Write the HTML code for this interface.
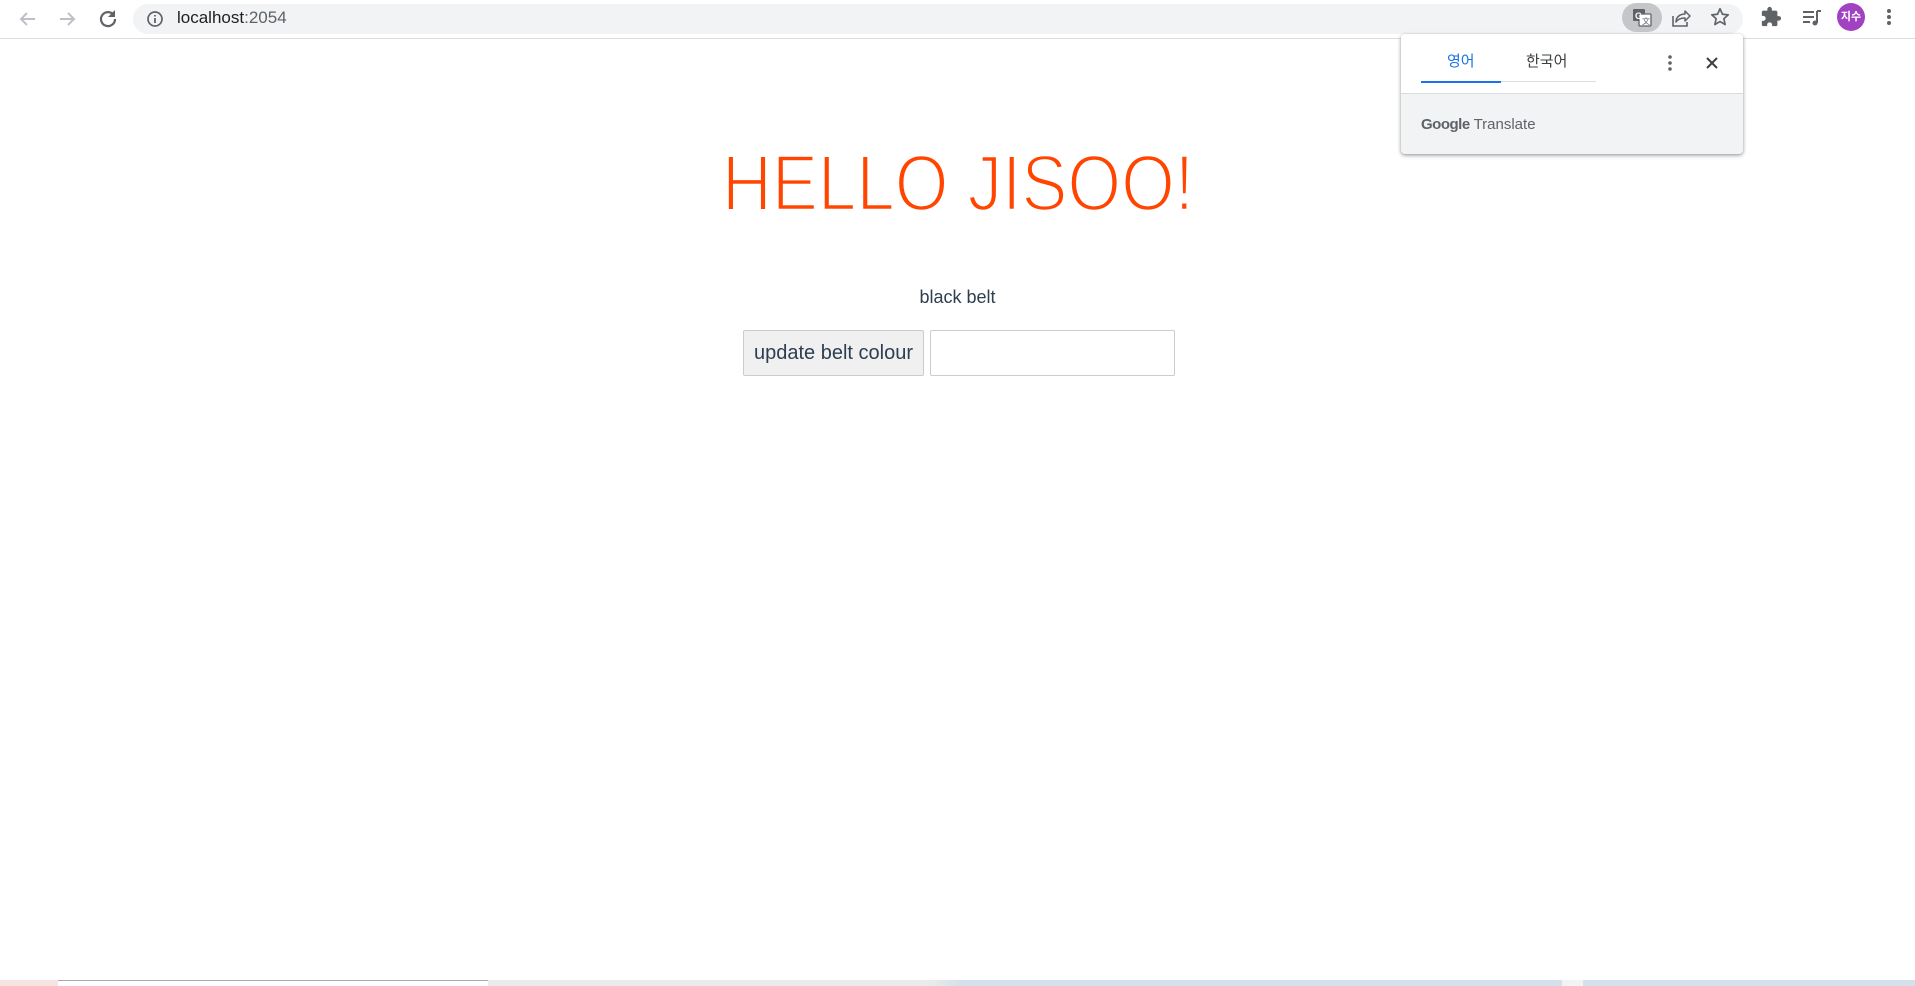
<!DOCTYPE html>
<html><head><meta charset="utf-8">
<style>
*{margin:0;padding:0;box-sizing:border-box}
body{width:1915px;height:986px;overflow:hidden;background:#fff;font-family:"Liberation Sans","Noto Sans CJK KR",sans-serif;position:relative}
.bar{position:absolute;left:0;top:0;width:1915px;height:39px;background:#fff;border-bottom:1px solid #dadce0}
.omni{position:absolute;left:133px;top:4px;width:1610px;height:30px;border-radius:15px;background:#f1f3f4}
.url{position:absolute;left:177px;top:8px;font-size:17px;color:#202124}
.url span{color:#5f6368}
.ic{position:absolute}
.pop{position:absolute;left:1401px;top:34px;width:342px;height:120px;background:#f1f3f4;border-radius:4px;box-shadow:0 1px 3px rgba(0,0,0,.35),0 2px 6px rgba(0,0,0,.12);overflow:hidden}
.pop .top{height:60px;background:#fff;border-bottom:1px solid #dadce0;position:relative}
.t{position:absolute;top:16px;font-size:15px}
.foot{position:absolute;left:20px;top:82px;font-size:15px;color:#5f6368}
.foot b{font-weight:bold;color:#5f6368;letter-spacing:-.5px}
.belt{position:absolute;left:0;width:1915px;top:287px;text-align:center;font-size:18px;color:#2c3e50}
.btn{position:absolute;left:743px;top:330px;width:181px;height:46px;background:#f0f0f0;border:1px solid #ccc;border-radius:2px;font-size:20px;color:#2c3e50;text-align:center;line-height:44px;white-space:nowrap}
.inp{position:absolute;left:930px;top:330px;width:245px;height:46px;border:1px solid #ccc;border-radius:2px;background:#fff}
</style></head><body>
<div class="bar">
<div class="omni"></div>
<svg class="ic" style="left:17px;top:8px" width="22" height="22" viewBox="0 0 22 22"><path d="M18 11H5M10 5l-6 6 6 6" stroke="#bdc1c6" stroke-width="2" fill="none"/></svg>
<svg class="ic" style="left:56px;top:8px" width="22" height="22" viewBox="0 0 22 22"><path d="M4 11h13M12 5l6 6-6 6" stroke="#bdc1c6" stroke-width="2" fill="none"/></svg>
<svg class="ic" style="left:97px;top:7px" width="22" height="22" viewBox="0 0 22 22"><path d="M17 8.5A7 7 0 1 0 18 12" stroke="#5f6368" stroke-width="2.2" fill="none"/><path d="M18 3v7h-7z" fill="#5f6368"/></svg>
<svg class="ic" style="left:146px;top:10px" width="18" height="18" viewBox="0 0 18 18"><circle cx="9" cy="9" r="7" stroke="#5f6368" stroke-width="1.7" fill="none"/><path d="M9 8v5M9 5v1.5" stroke="#5f6368" stroke-width="1.8"/></svg>
<div class="url">localhost<span>:2054</span></div>
<div class="ic" style="left:1622px;top:3px;width:40px;height:29px;border-radius:15px;background:#c4c6c9"></div>
<svg class="ic" style="left:1632px;top:7px" width="20" height="20" viewBox="0 0 20 20"><rect x="1" y="2" width="12" height="12" rx="1" fill="#5f6368"/><rect x="7" y="7" width="12" height="12" rx="1" fill="#fff" stroke="#5f6368" stroke-width="1.3"/><text x="3" y="12" font-size="9" font-weight="bold" fill="#fff" font-family="Liberation Sans">G</text><text x="10" y="17" font-size="8" fill="#5f6368" font-family="Liberation Sans">文</text></svg>
<svg class="ic" style="left:1670px;top:7px" width="22" height="22" viewBox="0 0 22 22"><path d="M3 9v10h14v-4" stroke="#5f6368" stroke-width="1.6" fill="none"/><path d="M6 15c0-5 4-8 9-8V4l5 5-5 5v-3c-4 0-7 1-9 4z" stroke="#5f6368" stroke-width="1.5" fill="none" stroke-linejoin="round"/></svg>
<svg class="ic" style="left:1709px;top:6px" width="22" height="22" viewBox="0 0 24 24"><path d="M12 3l2.7 6 6.3.6-4.8 4.3 1.4 6.3L12 17l-5.6 3.2 1.4-6.3L3 9.6l6.3-.6z" stroke="#5f6368" stroke-width="1.8" fill="none" stroke-linejoin="round"/></svg>
<svg class="ic" style="left:1760px;top:6px" width="22" height="22" viewBox="0 0 24 24"><path d="M20.5 11H19V7a2 2 0 0 0-2-2h-4V3.5a2.5 2.5 0 0 0-5 0V5H4a2 2 0 0 0-2 2v3.8h1.5a2.7 2.7 0 0 1 0 5.4H2V20a2 2 0 0 0 2 2h3.8v-1.5a2.7 2.7 0 0 1 5.4 0V22H17a2 2 0 0 0 2-2v-4h1.5a2.5 2.5 0 0 0 0-5z" fill="#5f6368"/></svg>
<svg class="ic" style="left:1800px;top:6px" width="24" height="24" viewBox="0 0 24 24"><path d="M3 6h11M3 11h11M3 16h7" stroke="#5f6368" stroke-width="2"/><path d="M17 5v12" stroke="#5f6368" stroke-width="2"/><path d="M17 5h4" stroke="#5f6368" stroke-width="2"/><circle cx="15" cy="17" r="2.5" fill="#5f6368"/></svg>
<div class="ic" style="left:1837px;top:3px;width:28px;height:28px;border-radius:50%;background:#a142c2;color:#fff;font-size:11px;line-height:28px;text-align:center;font-weight:bold">지수</div>
<svg class="ic" style="left:1880px;top:6px" width="18" height="22" viewBox="0 0 18 22"><circle cx="9" cy="5" r="2" fill="#5f6368"/><circle cx="9" cy="11" r="2" fill="#5f6368"/><circle cx="9" cy="17" r="2" fill="#5f6368"/></svg>
</div>
<div class="pop">
<div class="top">
<div class="t" style="left:46px;color:#1a73e8">영어</div>
<div class="t" style="left:125px;color:#3c4043">한국어</div>
<div style="position:absolute;left:20px;top:47px;width:175px;height:1px;background:#dadce0"></div>
<div style="position:absolute;left:20px;top:47px;width:80px;height:2px;background:#1a73e8"></div>
<svg style="position:absolute;left:264px;top:19px" width="10" height="22" viewBox="0 0 10 22"><circle cx="5" cy="4" r="1.8" fill="#5f6368"/><circle cx="5" cy="10" r="1.8" fill="#5f6368"/><circle cx="5" cy="16" r="1.8" fill="#5f6368"/></svg>
<svg style="position:absolute;left:305px;top:23px" width="12" height="12" viewBox="0 0 12 12"><path d="M1 1l10 10M11 1L1 11" stroke="#3c4043" stroke-width="2"/></svg>
</div>
<div class="foot"><b>Google</b> Translate</div>
</div>
<svg style="position:absolute;left:0;top:130px" width="1915" height="100"><text x="958" y="80" text-anchor="middle" font-family="Liberation Sans" font-size="79" fill="#ff4500" stroke="#fff" stroke-width="2.6" textLength="472" lengthAdjust="spacingAndGlyphs">HELLO JISOO!</text></svg>
<div class="belt">black belt</div>
<div class="btn">update belt colour</div>
<div class="inp"></div>
<div style="position:absolute;left:0;top:980px;width:1915px;height:6px;background:linear-gradient(90deg,#f6e4e0 0,#f6e4e0 58px,#fff 58px,#fff 488px,#ebebeb 488px,#ebebeb 930px,#d5e1ea 960px,#d5e1ea 1562px,#f3f3f3 1562px,#f3f3f3 1583px,#d5e1ea 1583px)"></div>
<div style="position:absolute;left:58px;top:980px;width:430px;height:1px;background:#aaa"></div>
</body></html>
